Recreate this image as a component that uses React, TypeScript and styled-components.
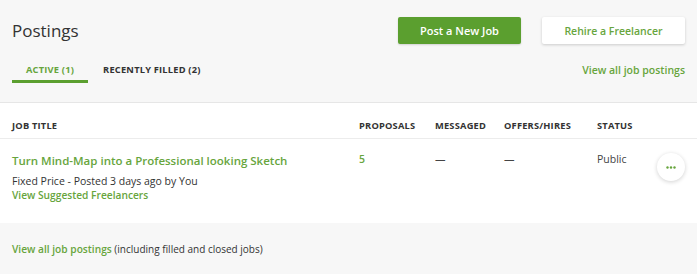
import React from 'react'
import styled, { createGlobalStyle } from 'styled-components'

const GREEN = '#5b9f2f'
const LINK = '#67a53d'
const TEXT = '#2f2f2f'

const GlobalStyle = createGlobalStyle`
  body {
    margin: 0;
    background: #ffffff;
    font-family: "Open Sans", "Liberation Sans", sans-serif;
    color: ${TEXT};
  }
`

const Page = styled.div`
  width: 697px;
  height: 274px;
  display: flex;
  flex-direction: column;
  background: #ffffff;
`

const Top = styled.div`
  background: #f7f7f7;
  border-bottom: 1px solid #e6e6e6;
  height: 103px;
  box-sizing: border-box;
  padding: 17px 12px 0 12px;
`

const HeaderRow = styled.div`
  display: flex;
  align-items: center;
  height: 27px;
`

const Title = styled.h1`
  margin: 0;
  flex: 1;
  font-size: 17px;
  font-weight: 400;
  color: #333333;
`

const Button = styled.button<{ primary?: boolean }>`
  height: 27px;
  width: ${({ primary }) => (primary ? '123px' : '143px')};
  margin-left: ${({ primary }) => (primary ? '0' : '21px')};
  padding: 0;
  border: 0;
  border-radius: 2px;
  font-family: inherit;
  font-size: ${({ primary }) => (primary ? '11px' : '10.5px')};
  font-weight: 600;
  background: ${({ primary }) => (primary ? GREEN : '#ffffff')};
  color: ${({ primary }) => (primary ? '#ffffff' : LINK)};
  box-shadow: ${({ primary }) => (primary ? '0 1px 2px rgba(0,0,0,0.15)' : '0 1px 3px rgba(0,0,0,0.18)')};
`

const TabRow = styled.div`
  display: flex;
  align-items: flex-start;
  margin-top: 19px;
  line-height: 14px;
`

const Tab = styled.div<{ active?: boolean }>`
  font-size: 9.3px;
  font-weight: 700;
  letter-spacing: 0.2px;
  text-transform: uppercase;
  color: ${({ active }) => (active ? LINK : '#333333')};
  padding: 0 ${({ active }) => (active ? '14px' : '0')} 3px;
  border-bottom: 3px solid ${({ active }) => (active ? GREEN : 'transparent')};
  margin-right: 15px;
`

const Spacer = styled.div`
  flex: 1;
`

const Link = styled.a<{ size?: number }>`
  color: ${LINK};
  font-size: ${({ size }) => size ?? 10.2}px;
  font-weight: 600;
  text-decoration: none;
`

const Table = styled.div`
  flex: 1;
  display: flex;
  flex-direction: column;
`

const Cols = styled.div`
  display: grid;
  grid-template-columns: 347px 76px 69px 93px 1fr;
  padding: 0 12px;
`

const HeadRow = styled(Cols)`
  height: 36px;
  align-items: center;
  padding-top: 10px;
  border-bottom: 1px solid #ececec;
  box-sizing: border-box;
`

const HeadCell = styled.div`
  font-size: 9.3px;
  font-weight: 700;
  letter-spacing: 0.2px;
  text-transform: uppercase;
  color: #333333;
`

const BodyRow = styled(Cols)`
  padding-top: 14px;
  align-items: start;
`

const JobTitle = styled.a`
  display: block;
  font-size: 11.5px;
  line-height: 16px;
  font-weight: 600;
  color: ${LINK};
  text-decoration: none;
  margin-bottom: 5px;
`

const Meta = styled.div`
  font-size: 10.5px;
  line-height: 14px;
  color: #333333;
`

const SuggestLink = styled(Link)`
  display: block;
  line-height: 14px;
`

const Cell = styled.div<{ green?: boolean }>`
  font-size: 10.5px;
  line-height: 12px;
  font-weight: ${({ green }) => (green ? 600 : 400)};
  color: ${({ green }) => (green ? LINK : '#444444')};
`

const StatusCell = styled.div`
  display: flex;
  justify-content: space-between;
  align-items: flex-start;
`

const MoreButton = styled.button`
  width: 28px;
  height: 28px;
  margin-top: 0;
  border-radius: 50%;
  border: 0;
  background: #ffffff;
  box-shadow: 0 1px 4px rgba(0, 0, 0, 0.18);
  display: flex;
  align-items: center;
  justify-content: center;
  padding: 0;
`

const Footer = styled.div`
  background: #f7f7f7;
  height: 51px;
  padding: 0 12px;
  display: flex;
  align-items: center;
  font-size: 10px;
  color: #333333;
`

export default function App() {
  return (
    <Page>
      <GlobalStyle />
      <Top>
        <HeaderRow>
          <Title>Postings</Title>
          <Button primary>Post a New Job</Button>
          <Button>Rehire a Freelancer</Button>
        </HeaderRow>
        <TabRow>
          <Tab active>Active (1)</Tab>
          <Tab>Recently Filled (2)</Tab>
          <Spacer />
          <Link size={10.5}>View all job postings</Link>
        </TabRow>
      </Top>
      <Table>
        <HeadRow>
          <HeadCell>Job Title</HeadCell>
          <HeadCell>Proposals</HeadCell>
          <HeadCell>Messaged</HeadCell>
          <HeadCell>Offers/Hires</HeadCell>
          <HeadCell>Status</HeadCell>
        </HeadRow>
        <BodyRow>
          <div>
            <JobTitle>Turn Mind-Map into a Professional looking Sketch</JobTitle>
            <Meta>Fixed Price - Posted 3 days ago by You</Meta>
            <SuggestLink>View Suggested Freelancers</SuggestLink>
          </div>
          <Cell green>5</Cell>
          <Cell>—</Cell>
          <Cell>—</Cell>
          <StatusCell>
            <Cell>Public</Cell>
            <MoreButton aria-label="More">
              <svg width="10" height="3" viewBox="0 0 10 3">
                <circle cx="1.5" cy="1.5" r="1.2" fill={LINK} />
                <circle cx="5" cy="1.5" r="1.2" fill={LINK} />
                <circle cx="8.5" cy="1.5" r="1.2" fill={LINK} />
              </svg>
            </MoreButton>
          </StatusCell>
        </BodyRow>
      </Table>
      <Footer>
        <Link>View all job postings</Link>&nbsp;(including filled and closed jobs)
      </Footer>
    </Page>
  )
}
